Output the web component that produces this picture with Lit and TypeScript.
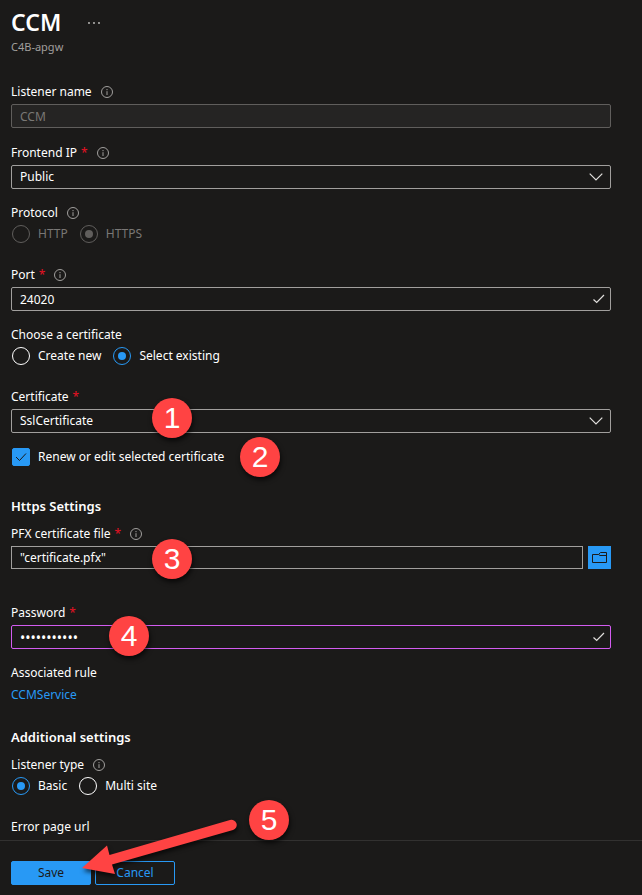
import { LitElement, html, css, svg, nothing } from "lit";
import { customElement } from "lit/decorators.js";

const infoIcon = html`<svg class="info" viewBox="0 0 14 14" aria-hidden="true">
  <circle cx="7" cy="7" r="5.5" />
  <path d="M7 6.2V10M7 4v1.2" />
</svg>`;

const checkIcon = html`<svg class="glyph tick" viewBox="0 0 14 12" aria-hidden="true">
  <path d="M1.5 6.5l3.2 3L12 2" />
</svg>`;

const chevronIcon = html`<svg class="glyph chevron" viewBox="0 0 14 10" aria-hidden="true">
  <path d="M.7 1.700L7 8l6.300-6.300" />
</svg>`;

const markers = [
  { n: 1, x: 152, y: 398 },
  { n: 2, x: 240, y: 437 },
  { n: 3, x: 152, y: 539 },
  { n: 4, x: 109, y: 616 },
  { n: 5, x: 249, y: 800 },
];

@customElement("app-root")
export class AppRoot extends LitElement {
  static styles = css`
    :host {
      display: block;
      position: relative;
      min-height: 100vh;
      background: #1b1a19;
      color: #ffffff;
      font: 12px/20px "Noto Sans", "Open Sans", sans-serif;
      overflow: hidden;
    }
    * { box-sizing: border-box; }
    main { padding: 8px 31px 3px 11px; }
    header { margin-bottom: 25px; }
    .title-row { display: flex; align-items: center; gap: 26px; }
    h1 { margin: 0; font-size: 23px; line-height: 29px; font-weight: 600; }
    .more {
      width: 14px; height: 20px; padding: 0; border: 0; background: none;
    }
    .more svg { display: block; width: 14px; height: 20px; fill: #c8c6c4; }
    .subtitle { margin: 0; font-size: 11px; line-height: 20px; color: #a19f9d; }
    h2 { margin: 0; font-size: 13px; line-height: 20px; font-weight: 600; }
    .field { margin: 0 0 14px; padding: 0; border: 0; min-width: 0; }
    .near { margin-bottom: 15px; }
    .far { margin-bottom: 22px; }
    .section { margin-bottom: 8px; }
    .wide { margin-bottom: 30px; }
    .file { margin-bottom: 34px; }
    .last { margin-bottom: 0; }
    .caption {
      display: flex; align-items: center;
      height: 20px; margin: 0 0 2px; padding: 0;
    }
    .req { margin-left: 4px; color: #e81123; }
    .info {
      width: 14px; height: 14px; margin-left: 8px;
      fill: none; stroke: #a19f9d; stroke-width: 1;
    }
    .box { position: relative; display: flex; flex: 1; min-width: 0; }
    .control {
      width: 100%; height: 24px; margin: 0; padding: 0 8px;
      border: 1px solid #a19f9d; border-radius: 2px;
      background: #1b1a19; color: #ffffff;
      font: inherit; line-height: 20px; appearance: none; outline: none;
    }
    .control:disabled { background: #252423; border-color: #605e5c; color: #797775; opacity: 1; }
    .picked { height: 23px; border-radius: 0; }
    .active { border-color: #d35cf0; font-size: 14px; }
    .glyph {
      position: absolute; top: 0; bottom: 0; margin: auto 0;
      fill: none; stroke: #e1dfdd; stroke-width: 1.2; pointer-events: none;
    }
    .chevron { right: 8px; width: 14px; height: 10px; }
    .tick { right: 5px; width: 14px; height: 12px; }
    .file-row { display: flex; gap: 5px; }
    .browse {
      width: 23px; height: 23px; padding: 0; border: 0;
      background: #2899f5; color: #1b1a19;
    }
    .browse svg { display: block; width: 23px; height: 23px; fill: none; stroke: currentColor; }
    .options { display: flex; gap: 12px; padding-left: 1px; }
    .option { display: flex; align-items: center; gap: 8px; height: 18px; }
    .option input {
      appearance: none; display: grid; place-content: center;
      width: 18px; height: 18px; margin: 0;
      border: 1px solid #ffffff; border-radius: 50%;
    }
    .option input:checked { border-color: #2899f5; color: #2899f5; }
    .option input:checked::before {
      content: ""; width: 8px; height: 8px; border-radius: 50%; background: currentColor;
    }
    .option input:disabled { border-color: #605e5c; color: #605e5c; }
    .off { color: #797775; }
    .check { position: relative; padding-left: 1px; }
    .option.check input { border-radius: 2px; }
    .option.check input:checked { background: #2899f5; }
    .option.check input:checked::before { content: none; }
    .check svg {
      position: absolute; left: 3px; top: 3px; width: 14px; height: 12px;
      fill: none; stroke: #1b1a19; pointer-events: none;
    }
    a { display: block; color: #2899f5; text-decoration: none; }
    footer {
      display: flex; gap: 4px; padding: 20px 11px 10px;
      border-top: 1px solid #323130;
    }
    .btn {
      width: 80px; height: 24px; padding: 0;
      border: 1px solid #2899f5; border-radius: 2px;
      background: none; color: #2899f5; font: inherit; line-height: 20px;
    }
    .primary { background: #2899f5; color: #1b1a19; }
    .marker {
      position: absolute; width: 40px; height: 40px; border-radius: 50%;
      background: #ff4343; color: #ffffff; text-align: center;
      font: 30px/40px "Liberation Sans", Arial, sans-serif;
      box-shadow: 1px 3px 5px #000000b0; pointer-events: none;
    }
    .arrow {
      position: absolute; left: 76px; top: 812px; width: 168px; height: 70px;
      fill: #ff4343; filter: drop-shadow(1px 3px 2px #000000a0); pointer-events: none;
    }
  `;

  private caption(text: string, id: string, required = false, info = false) {
    return html`<label class="caption" for=${id}>${text}${required
      ? html`<span class="req">*</span>` : nothing}${info ? infoIcon : nothing}</label>`;
  }

  private legend(text: string, info = false) {
    return html`<legend class="caption">${text}${info ? infoIcon : nothing}</legend>`;
  }

  private radio(group: string, text: string, checked = false, disabled = false) {
    return html`<label class="option ${disabled ? "off" : ""}"
      ><input type="radio" name=${group} ?checked=${checked} ?disabled=${disabled} />${text}</label>`;
  }

  render() {
    return html`
      <main>
        <header>
          <div class="title-row">
            <h1>CCM</h1>
            <button class="more" aria-label="More">
              <svg viewBox="0 0 14 20">${[2, 7, 12].map(
                (x) => svg`<circle cx=${x} cy="10" r="0.9" />`)}</svg>
            </button>
          </div>
          <p class="subtitle">C4B-apgw</p>
        </header>

        <div class="field near">
          ${this.caption("Listener name", "name", false, true)}
          <div class="box"><input class="control" id="name" value="CCM" disabled /></div>
        </div>
        <div class="field">
          ${this.caption("Frontend IP", "ip", true, true)}
          <div class="box">
            <select class="control" id="ip"><option>Public</option></select>${chevronIcon}
          </div>
        </div>
        <fieldset class="field far">
          ${this.legend("Protocol", true)}
          <div class="options">
            ${this.radio("protocol", "HTTP", false, true)}
            ${this.radio("protocol", "HTTPS", true, true)}
          </div>
        </fieldset>
        <div class="field">
          ${this.caption("Port", "port", true, true)}
          <div class="box"><input class="control" id="port" value="24020" />${checkIcon}</div>
        </div>
        <fieldset class="field far">
          ${this.legend("Choose a certificate")}
          <div class="options">
            ${this.radio("source", "Create new")}
            ${this.radio("source", "Select existing", true)}
          </div>
        </fieldset>
        <div class="field near">
          ${this.caption("Certificate", "cert", true)}
          <div class="box">
            <select class="control" id="cert"><option>SslCertificate</option></select>${chevronIcon}
          </div>
        </div>
        <div class="field wide">
          <label class="option check"><input type="checkbox" checked /><svg viewBox="0 0 14 12">
            <path d="M2 6l3.500 3.500L12 2.500" /></svg>Renew or edit selected certificate</label>
        </div>

        <h2 class="section">Https Settings</h2>
        <div class="field file">
          ${this.caption("PFX certificate file", "pfx", true, true)}
          <div class="file-row">
            <div class="box"><input class="control picked" id="pfx" value='"certificate.pfx"' /></div>
            <button class="browse" aria-label="Browse">
              <svg viewBox="0 0 23 23"><path d="M4.500 8.500h6l2-2h6v10h-14zM10.500 8.500l1.500 1h6.500" /></svg>
            </button>
          </div>
        </div>
        <div class="field">
          ${this.caption("Password", "password", true)}
          <div class="box">
            <input class="control active" id="password" type="password" value="certificate" />${checkIcon}
          </div>
        </div>
        <div class="field far">
          <div class="caption">Associated rule</div>
          <a href="#rule">CCMService</a>
        </div>

        <h2 class="section">Additional settings</h2>
        <fieldset class="field far">
          ${this.legend("Listener type", true)}
          <div class="options">
            ${this.radio("type", "Basic", true)}
            ${this.radio("type", "Multi site")}
          </div>
        </fieldset>
        <div class="field last">Error page url</div>
      </main>
      <footer>
        <button class="btn primary">Save</button>
        <button class="btn">Cancel</button>
      </footer>

      ${markers.map((m) => html`<div class="marker" style="left:${m.x}px;top:${m.y}px">${m.n}</div>`)}
      <svg class="arrow" viewBox="0 0 168 70" aria-hidden="true">
        <path d="M6 56L31 33.500L33.500 43L154 8a5 5 0 0 1 3 10L36 52.500L39 62Z" />
      </svg>
    `;
  }
}
